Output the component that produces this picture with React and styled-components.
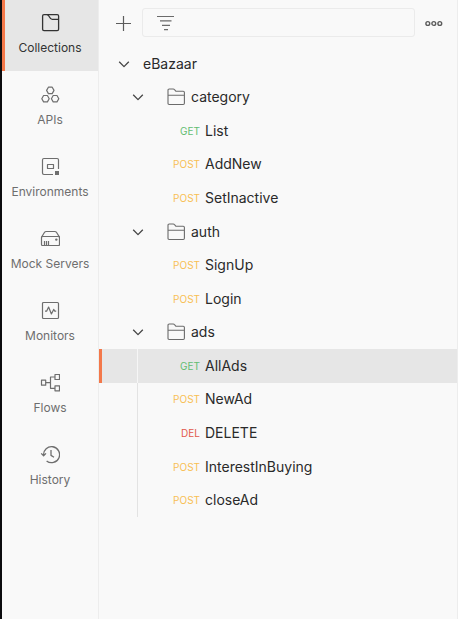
import React from "react";
import styled, { createGlobalStyle } from "styled-components";

const GlobalStyle = createGlobalStyle`
  *, *::before, *::after { box-sizing: border-box; }
  body {
    margin: 0;
    background: #fff;
    color: #2a2a2a;
    font-family: Inter, "Liberation Sans", sans-serif;
  }
  button, input { font: inherit; color: inherit; }
`;

const Window = styled.div`
  display: flex;
  min-height: 100vh;
  margin-right: 1px;
  background: #f9f9f9;
  border-left: 2px solid #0c0c0e;
  border-right: 1px solid #ededed;
  overflow: hidden;
`;

const Sidebar = styled.nav`
  flex: 0 0 97px;
  display: flex;
  flex-direction: column;
  margin-top: -1px;
  border-right: 1px solid #ededed;
`;

const SidebarButton = styled.button`
  display: flex;
  flex-direction: column;
  align-items: center;
  gap: 5px;
  height: 72px;
  padding: 14px 0 13px;
  border: 0;
  background: ${(p) => (p.$active ? "#e6e6e6" : "transparent")};
  box-shadow: ${(p) => (p.$active ? "inset 3px 0 #f3784a" : "none")};
  color: ${(p) => (p.$active ? "#333" : "#6e6e6e")};
  font-size: 12px;
  line-height: 20px;
  white-space: nowrap;
  cursor: pointer;
`;

const Svg = styled.svg`
  flex: none;
  display: block;
  fill: none;
  stroke: currentColor;
  stroke-linejoin: round;
`;

const Main = styled.main`
  flex: 1;
  min-width: 0;
`;

const Toolbar = styled.div`
  display: flex;
  align-items: center;
  padding: 8px 13px 10px 14px;
`;

const IconButton = styled.button`
  display: grid;
  place-items: center;
  width: 20px;
  height: 20px;
  padding: 0;
  border: 0;
  background: none;
  color: #5c5c5c;
  cursor: pointer;
`;

const FilterBox = styled.label`
  flex: 1;
  min-width: 0;
  display: flex;
  align-items: center;
  gap: 8px;
  height: 29px;
  margin: 0 9px;
  padding: 0 13px;
  border: 1px solid #ebebeb;
  border-radius: 3px;
  color: #6b6b6b;
`;

const FilterInput = styled.input`
  flex: 1;
  min-width: 0;
  border: 0;
  outline: 0;
  background: none;
  font-size: 14px;
`;

const Tree = styled.div`
  display: grid;
  grid-auto-rows: 1fr;
  min-height: 470px;
`;

const indents = { collection: 19, folder: 33, request: 0 };

const Row = styled.button`
  position: relative;
  display: flex;
  align-items: center;
  padding: 0 0 0 ${(p) => indents[p.$kind]}px;
  border: 0;
  background: ${(p) => (p.$selected ? "#e6e6e6" : "transparent")};
  box-shadow: ${(p) => (p.$selected ? "inset 3px 0 #f3784a" : "none")};
  font-size: 14px;
  line-height: 20px;
  text-align: left;
  white-space: nowrap;
  cursor: pointer;

  &::before {
    content: "";
    display: ${(p) => (p.$guide ? "block" : "none")};
    position: absolute;
    top: 0;
    bottom: 0;
    left: 38px;
    width: 1px;
    background: ${(p) => (p.$selected ? "#f6f6f6" : "#e3e3e3")};
  }
`;

const Toggle = styled.span`
  flex: none;
  width: ${(p) => (p.$kind === "folder" ? 34 : 25)}px;
  color: #444;
`;

const FolderSlot = styled.span`
  flex: none;
  width: 25px;
  color: #6b6b6b;
`;

const methodColors = { GET: "#63bd72", POST: "#f8bf55", DEL: "#e2574c" };

const Method = styled.span`
  flex: none;
  width: 101px;
  margin-right: 5px;
  color: ${(p) => methodColors[p.$method]};
  font-size: 10px;
  text-align: right;
`;

const Icon = ({ size = 20, children, ...rest }) => (
  <Svg width={size} height={size} viewBox={`0 0 ${size} ${size}`} aria-hidden="true" {...rest}>
    {children}
  </Svg>
);

const hexagon = (x, y) =>
  `M${x - 1.9} ${y - 3.2}h3.8l1.8 3.2l-1.8 3.2h-3.8l-1.8 -3.2z`;

const CollectionsIcon = () => (
  <Icon strokeWidth="1.3">
    <rect x="2.6" y="1.6" width="16" height="16" rx="1.4" />
    <path d="M7 1.6C9.8 1.8 9.2 6.3 12.2 6.3H18.6" />
  </Icon>
);
const ApisIcon = () => (
  <Icon strokeWidth="1.2">
    <path d={hexagon(10.3, 5.4)} />
    <path d={hexagon(5.5, 13.7)} />
    <path d={hexagon(15.1, 13.7)} />
  </Icon>
);
const EnvironmentsIcon = () => (
  <Icon strokeWidth="1.2">
    <path d="M13 17.5H3.9Q2.5 17.5 2.5 16.1V2.9Q2.5 1.5 3.9 1.5H17.1Q18.5 1.5 18.5 2.9V12" />
    <rect x="7.5" y="7.5" width="6" height="4" />
    <rect x="15" y="14" width="4" height="4" fill="currentColor" stroke="none" />
  </Icon>
);
const MockServersIcon = () => (
  <Icon strokeWidth="1.2">
    <path d="M1.5 8.2L4.4 3.5Q5 2.5 6.2 2.5H14.8Q16 2.5 16.6 3.5L19.5 8.2" />
    <rect x="1.5" y="7.5" width="18" height="9" rx="1" />
    <path d="M4.5 12V16M6.5 12V16M8.5 12V16" />
    <circle cx="16.3" cy="10.6" r="1.2" fill="currentColor" stroke="none" />
  </Icon>
);
const MonitorsIcon = () => (
  <Icon strokeWidth="1.2">
    <rect x="2.5" y="1.5" width="16" height="16" rx="1" />
    <path d="M5 10.2H6.6L8.6 6L11.4 13L13.7 8.4L14.8 10.2H16.2" />
  </Icon>
);
const FlowsIcon = () => (
  <Icon strokeWidth="1.2">
    <rect x="1.5" y="7.2" width="4.2" height="5" />
    <rect x="15" y="1.5" width="4.5" height="5" />
    <rect x="15" y="12.8" width="4.5" height="5" />
    <path d="M5.7 9.6H10.5M15 4H10.5V15.3H15" />
  </Icon>
);
const HistoryIcon = () => (
  <Icon strokeWidth="1.3">
    <path d="M3.6 10.3A8 8 0 1 1 6.6 15.9M1.2 8.4L3.6 10.7L6 8.4M11 5V10.4L14 12.2" />
  </Icon>
);
const PlusIcon = () => (
  <Icon strokeWidth="1.2">
    <path d="M3 10.5H18M10.5 3V18" />
  </Icon>
);
const FilterIcon = () => (
  <Icon strokeWidth="1.2">
    <path d="M1 3.5H18M4 7.8H15.5M6 12.3H14M8 16.6H12" />
  </Icon>
);
const MoreIcon = () => (
  <Icon strokeWidth="1.4">
    <circle cx="3.8" cy="10.5" r="1.9" />
    <circle cx="9.8" cy="10.5" r="1.9" />
    <circle cx="15.8" cy="10.5" r="1.9" />
  </Icon>
);
const ChevronIcon = () => (
  <Icon size={12} strokeWidth="1.3">
    <path d="M1.2 3.8L6 8.6L10.8 3.8" />
  </Icon>
);
const FolderIcon = () => (
  <Icon strokeWidth="1.1">
    <path d="M2 16.3V3.2Q2 2 3.2 2H7.3Q8 2 8.5 2.6L10 4.3H17.2Q18.4 4.3 18.4 5.5V16.3Q18.4 17.5 17.2 17.5H3.2Q2 17.5 2 16.3ZM2 8.3H18.4" />
  </Icon>
);

const sections = [
  ["Collections", CollectionsIcon],
  ["APIs", ApisIcon],
  ["Environments", EnvironmentsIcon],
  ["Mock Servers", MockServersIcon],
  ["Monitors", MonitorsIcon],
  ["Flows", FlowsIcon],
  ["History", HistoryIcon],
];

const rows = [
  { kind: "collection", name: "eBazaar" },
  { kind: "folder", name: "category" },
  { kind: "request", method: "GET", name: "List" },
  { kind: "request", method: "POST", name: "AddNew" },
  { kind: "request", method: "POST", name: "SetInactive" },
  { kind: "folder", name: "auth" },
  { kind: "request", method: "POST", name: "SignUp" },
  { kind: "request", method: "POST", name: "Login" },
  { kind: "folder", name: "ads" },
  { kind: "request", method: "GET", name: "AllAds", guide: true, selected: true },
  { kind: "request", method: "POST", name: "NewAd", guide: true },
  { kind: "request", method: "DEL", name: "DELETE", guide: true },
  { kind: "request", method: "POST", name: "InterestInBuying", guide: true },
  { kind: "request", method: "POST", name: "closeAd", guide: true },
];

const TreeRow = ({ kind, method, name, guide, selected }) => (
  <Row
    type="button"
    $kind={kind}
    $guide={guide}
    $selected={selected}
    aria-expanded={kind === "request" ? undefined : true}
    aria-current={selected ? "true" : undefined}
  >
    {kind !== "request" && (
      <Toggle $kind={kind}>
        <ChevronIcon />
      </Toggle>
    )}
    {kind === "folder" && (
      <FolderSlot>
        <FolderIcon />
      </FolderSlot>
    )}
    {method && <Method $method={method}>{method}</Method>}
    <span>{name}</span>
  </Row>
);

export default function App() {
  return (
    <>
      <GlobalStyle />
      <Window>
        <Sidebar aria-label="Workspace">
          {sections.map(([label, SectionIcon], i) => (
            <SidebarButton key={label} type="button" $active={i === 0}>
              <SectionIcon />
              <span>{label}</span>
            </SidebarButton>
          ))}
        </Sidebar>
        <Main>
          <Toolbar>
            <IconButton type="button" aria-label="Create new">
              <PlusIcon />
            </IconButton>
            <FilterBox>
              <FilterIcon />
              <FilterInput type="text" aria-label="Filter collections" />
            </FilterBox>
            <IconButton type="button" aria-label="More options">
              <MoreIcon />
            </IconButton>
          </Toolbar>
          <Tree>
            {rows.map((row) => (
              <TreeRow key={row.name} {...row} />
            ))}
          </Tree>
        </Main>
      </Window>
    </>
  );
}
